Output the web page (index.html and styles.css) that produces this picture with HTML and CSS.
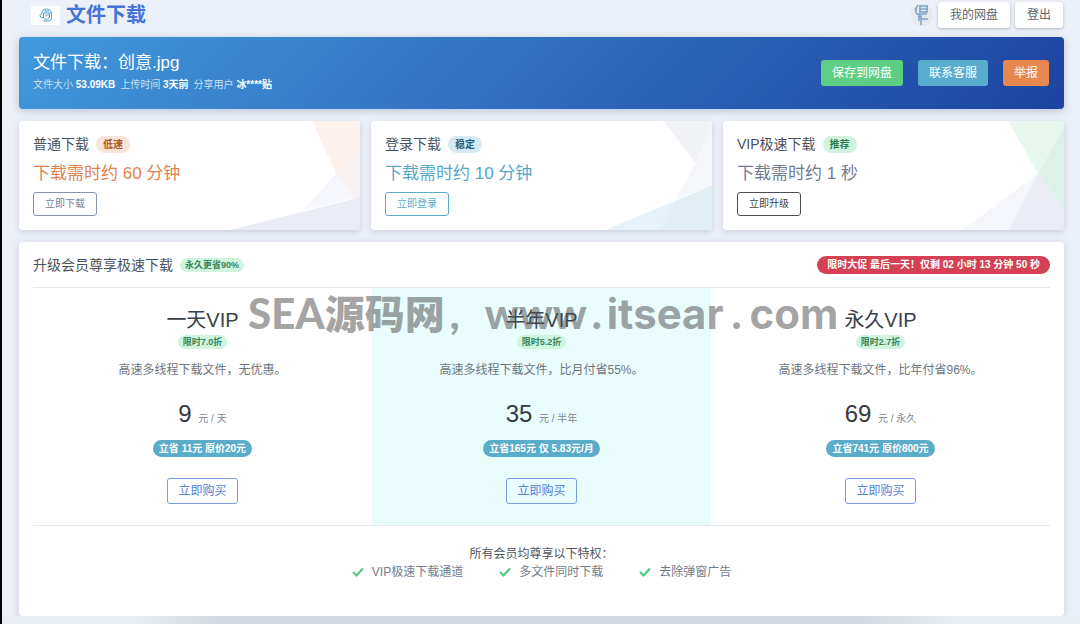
FILE: index.html
```
<!DOCTYPE html>
<html lang="zh-CN">
<head>
    <meta charset="UTF-8">
    <meta name="viewport" content="width=device-width, initial-scale=1.0">
    <title>文件下载</title>
    <link rel="stylesheet" href="styles.css">
</head>
<body>

    <!-- Top bar -->
    <header class="topbar">
        <a class="brand" href="#">
            <span class="brand-logo">
                <svg width="14" height="14" viewBox="0 0 14 14" fill="none" stroke="#4b9bcf" stroke-width="1">
                    <path d="M3 5C3 2 5 1 7.500 1S12.500 2.500 12.500 5.500V9.500C12.500 12 11 13 9 13H4.500"/>
                    <path d="M3 5L1 7.500L2 9.500H4.500V5H12M4.500 9.500C5 11.500 10 12 10.500 9V5M5 3H10M7 6.500V8.500M9 6.500V8"/>
                </svg>
            </span>
            文件下载
        </a>
        <nav class="topbar-nav">
            <span class="avatar">
                <svg width="22" height="22" viewBox="0 0 22 22" fill="none" stroke="#7fa5c8" stroke-width="1.500">
                    <path d="M7 1L4 6M5 4V9M8 2H17M8 5H17M8 8H17M9 2V8M16 2V8M5 10H16M8 10V17M10 15H17M10 11V21M7 13H10"/>
                </svg>
            </span>
            <button class="btn btn-white">我的网盘</button>
            <button class="btn btn-white">登出</button>
        </nav>
    </header>

    <main>
        <!-- File info -->
        <section class="file-banner">
            <div>
                <h1>文件下载：创意.jpg</h1>
                <p class="file-meta">
                    <span>文件大小 <b>53.09KB</b></span>
                    <span>上传时间 <b>3天前</b></span>
                    <span>分享用户 <b>冰****贴</b></span>
                </p>
            </div>
            <div class="banner-actions">
                <button class="btn btn-green">保存到网盘</button>
                <button class="btn btn-blue">联系客服</button>
                <button class="btn btn-orange">举报</button>
            </div>
        </section>

        <!-- Download options -->
        <section class="options">
            <div class="option-card">
                <svg class="card-art" width="140" height="110" viewBox="0 0 140 110" preserveAspectRatio="none">
                    <path fill="#fcf1ec" d="M92 0H140V30L116 53Z"/>
                    <path fill="#f8f1f1" d="M140 30L116 53L133 78L140 80Z"/>
                    <path fill="#f6f7fc" d="M116 53L83 90L133 78Z"/>
                    <path fill="#eaecf6" d="M10 110L140 77V110Z"/>
                </svg>
                <h2>普通下载 <span class="badge badge-orange">低速</span></h2>
                <p class="wait text-orange">下载需时约 60 分钟</p>
                <button class="btn btn-small outline-gray">立即下载</button>
            </div>
            <div class="option-card">
                <svg class="card-art" width="140" height="110" viewBox="0 0 140 110" preserveAspectRatio="none">
                    <path fill="#f5f6f9" d="M92 0H140V65L103 79L124 43Z"/>
                    <path fill="#f1f2f6" d="M92 0H140L124 43Z"/>
                    <path fill="#e6f2f7" d="M33 110L140 65V110Z"/>
                    <path fill="#e1eff5" d="M103 81L140 65V110H88Z"/>
                </svg>
                <h2>登录下载 <span class="badge badge-blue">稳定</span></h2>
                <p class="wait text-blue">下载需时约 10 分钟</p>
                <button class="btn btn-small outline-blue">立即登录</button>
            </div>
            <div class="option-card">
                <svg class="card-art" width="140" height="110" viewBox="0 0 140 110" preserveAspectRatio="none">
                    <path fill="#e6f7ee" d="M84 0H140V6L114 53Z"/>
                    <path fill="#dcf2e8" d="M140 6L114 53L140 90Z"/>
                    <path fill="#eaecf6" d="M114 53L140 90V110H84Z"/>
                    <path fill="#f5f6fb" d="M114 53L84 110H38Z"/>
                </svg>
                <h2>VIP极速下载 <span class="badge badge-green">推荐</span></h2>
                <p class="wait text-gray">下载需时约 1 秒</p>
                <button class="btn btn-small outline-dark">立即升级</button>
            </div>
        </section>

        <!-- VIP plans -->
        <section class="vip-panel">
            <div class="vip-head">
                <h2>升级会员尊享极速下载 <span class="tag">永久更省90%</span></h2>
                <span class="countdown">限时大促 最后一天！仅剩 02 小时 13 分钟 50 秒</span>
            </div>

            <div class="plans">
                <div class="plan">
                    <h3>一天VIP</h3>
                    <span class="tag">限时7.0折</span>
                    <p class="plan-desc">高速多线程下载文件，无优惠。</p>
                    <p class="price">9 <small>元 / 天</small></p>
                    <span class="saving">立省 11元 原价20元</span>
                    <button class="btn outline-primary">立即购买</button>
                </div>
                <div class="plan plan-active">
                    <h3>半年VIP</h3>
                    <span class="tag">限时5.2折</span>
                    <p class="plan-desc">高速多线程下载文件，比月付省55%。</p>
                    <p class="price">35 <small>元 / 半年</small></p>
                    <span class="saving">立省165元 仅 5.83元/月</span>
                    <button class="btn outline-primary">立即购买</button>
                </div>
                <div class="plan">
                    <h3>永久VIP</h3>
                    <span class="tag">限时2.7折</span>
                    <p class="plan-desc">高速多线程下载文件，比年付省96%。</p>
                    <p class="price">69 <small>元 / 永久</small></p>
                    <span class="saving">立省741元 原价800元</span>
                    <button class="btn outline-primary">立即购买</button>
                </div>
                <div class="watermark">
                    <span>SEA</span><span class="watermark-cn">源码网</span><span class="watermark-comma">,</span>
                    <span>www</span><span class="dot">.</span><span class="watermark-host">itsear</span><span class="dot dot-wide">.</span><span class="watermark-host">com</span>
                </div>
            </div>

            <div class="benefits">
                <p>所有会员均尊享以下特权：</p>
                <ul>
                    <li><svg width="12" height="10" viewBox="0 0 12 10"><path d="M1 5L4.500 8.500L11 1.500" fill="none" stroke="#4fc777" stroke-width="2"/></svg>VIP极速下载通道</li>
                    <li><svg width="12" height="10" viewBox="0 0 12 10"><path d="M1 5L4.500 8.500L11 1.500" fill="none" stroke="#4fc777" stroke-width="2"/></svg>多文件同时下载</li>
                    <li><svg width="12" height="10" viewBox="0 0 12 10"><path d="M1 5L4.500 8.500L11 1.500" fill="none" stroke="#4fc777" stroke-width="2"/></svg>去除弹窗广告</li>
                </ul>
            </div>
        </section>
    </main>
    <div class="bottom-shade"></div>

</body>
</html>
```
FILE: styles.css
```
/* General Styles */
* {
    box-sizing: border-box;
}

body {
    margin: 0;
    min-height: 100vh;
    display: flex;
    flex-direction: column;
    border-left: 2px solid #000;
    background: #ecf0f8;
    font-family: "Liberation Sans", "Noto Sans CJK SC", sans-serif;
    font-size: 12px;
    color: #6c757d;
}

h1, h2, h3, p, ul {
    margin: 0;
    padding: 0;
    font-weight: normal;
}

main {
    flex: 1;
    display: flex;
    flex-direction: column;
    gap: 12px;
    padding: 0 16px 0 17px;
}

/* Buttons */
.btn {
    height: 26px;
    padding: 0 10px;
    border: 1px solid transparent;
    border-radius: 3px;
    background: transparent;
    font-family: inherit;
    font-size: 12px;
    line-height: 18px;
    white-space: nowrap;
    cursor: pointer;
}

.btn-small {
    height: 24px;
    padding: 0 11px;
    font-size: 10px;
}

.btn-white {
    padding: 0 11px;
    background: #fff;
    color: #5d646d;
    box-shadow: 0 1px 3px rgba(60, 70, 100, 0.35);
}

.btn-green { background: #5dce83; color: #fff; }
.btn-blue { background: #5aaccf; color: #fff; }
.btn-orange { background: #e8864f; color: #fff; }

.outline-gray { border-color: #8794a8; color: #748094; }
.outline-blue { border-color: #5aaccb; color: #5aaccb; }
.outline-dark { border-color: #4a4f58; color: #3f444d; }
.outline-primary { border-color: #7b9be2; color: #5580dc; }

/* Top bar */
.topbar {
    display: flex;
    justify-content: space-between;
    align-items: flex-start;
    height: 37px;
    padding: 2px 17px 0 29px;
}

.brand {
    display: flex;
    align-items: center;
    gap: 6px;
    color: #4573d9;
    font-size: 20px;
    line-height: 26px;
    font-weight: bold;
    text-decoration: none;
}

.brand-logo {
    display: flex;
    align-items: center;
    justify-content: center;
    width: 29px;
    height: 19px;
    background: #fff;
}

.topbar-nav {
    display: flex;
    align-items: center;
    gap: 5px;
}

.avatar {
    display: flex;
    border-radius: 50%;
    background: #e6eaed;
}

/* File banner */
.file-banner {
    display: flex;
    justify-content: space-between;
    align-items: center;
    height: 72px;
    padding: 0 15px 0 14px;
    border-radius: 4px;
    background: linear-gradient(135deg, #4299dc, #1c43a0);
    box-shadow: 0 2px 8px rgba(40, 70, 130, 0.25);
    color: #fff;
}

.file-banner h1 {
    font-size: 17px;
    line-height: 24px;
}

.file-meta {
    display: flex;
    gap: 5px;
    font-size: 10px;
    line-height: 20px;
    color: #c9e0f5;
}

.file-meta b {
    color: #fff;
}

.banner-actions {
    display: flex;
    gap: 15px;
}

/* Option cards */
.options {
    display: grid;
    grid-template-columns: repeat(3, 1fr);
    gap: 11px;
}

.option-card {
    position: relative;
    height: 109px;
    padding: 12px 14px;
    border-radius: 4px;
    overflow: hidden;
    background: #fff;
    box-shadow: 0 2px 6px rgba(60, 70, 110, 0.2);
}

.option-card > * {
    position: relative;
}

.option-card .card-art {
    position: absolute;
    top: 0;
    right: 0;
    height: 100%;
}

.option-card h2,
.vip-head h2 {
    display: flex;
    align-items: center;
    gap: 7px;
    font-size: 14px;
    line-height: 22px;
    color: #4c525b;
}

.wait {
    margin: 4px 0;
    font-size: 17px;
    line-height: 29px;
}

.text-orange { color: #e2834f; }
.text-blue { color: #55a8c8; }
.text-gray { color: #737c8e; }

/* Badges */
.badge,
.tag,
.saving,
.countdown {
    border-radius: 10px;
    font-weight: bold;
    font-size: 10px;
    white-space: nowrap;
}

.badge {
    padding: 0 7px;
    line-height: 17px;
}

.badge-orange { background: #fae3d8; color: #a8572c; }
.badge-blue { background: #d5eaf4; color: #2b5f7c; }
.badge-green { background: #cff3de; color: #2c7d50; }

.tag {
    padding: 0 5px;
    font-size: 9px;
    line-height: 14px;
    background: #cff5df;
    color: #39835a;
}

.saving {
    padding: 0 6px;
    line-height: 17px;
    background: #5aaccb;
    color: #fff;
}

.countdown {
    padding: 0 10px;
    line-height: 18px;
    background: #d44154;
    color: #fff;
}

/* VIP panel */
.vip-panel {
    flex: 1;
    padding: 0 14px;
    border-radius: 4px;
    background: #fff;
    box-shadow: 0 2px 8px rgba(60, 70, 110, 0.2);
}

.vip-head {
    display: flex;
    justify-content: space-between;
    align-items: center;
    height: 46px;
    border-bottom: 1px solid #e3e6eb;
}

.plans {
    position: relative;
    display: grid;
    grid-template-columns: repeat(3, 1fr);
    border-bottom: 1px solid #e3e6eb;
}

.plan {
    display: flex;
    flex-direction: column;
    align-items: center;
    padding: 18px 0 21px;
}

.plan-active {
    background: #e8fdfc;
}

.plan h3 {
    font-size: 20px;
    line-height: 29px;
    color: #3b414b;
}

.plan-desc {
    margin: 12px 0 18px;
    font-size: 12px;
    line-height: 18px;
}

.price {
    margin-bottom: 4px;
    font-size: 24px;
    line-height: 34px;
    color: #343a44;
}

.price small {
    font-size: 10px;
    color: #7d8592;
}

.saving {
    margin-bottom: 21px;
}

/* Site watermark over the plans */
.watermark {
    position: absolute;
    top: 0;
    left: 215px;
    display: flex;
    align-items: baseline;
    font-family: Lato, sans-serif;
    font-size: 42px;
    font-weight: 900;
    line-height: 48px;
    color: rgba(85, 85, 85, 0.55);
    pointer-events: none;
}

.watermark-cn {
    font-family: "Noto Sans CJK SC", sans-serif;
    font-size: 40px;
}

.watermark-comma {
    padding: 0 25px 0 5px;
}

.watermark-host {
    font-family: Inter, sans-serif;
    font-weight: 700;
}

.dot {
    padding: 0 5px;
}

.dot-wide {
    padding: 0 8px;
}

/* Benefits */
.benefits {
    padding: 19px 0 35px;
    text-align: center;
    line-height: 18px;
    color: #4f5660;
}

.benefits ul {
    display: flex;
    justify-content: center;
    gap: 36px;
    list-style: none;
    color: #737c8a;
}

.benefits li {
    display: flex;
    align-items: center;
    gap: 8px;
}

.bottom-shade {
    height: 9px;
    background: linear-gradient(90deg, #e8edf3 130px, #d3d7df 220px, #d3d7df 860px, #e8edf3 950px);
}
```
